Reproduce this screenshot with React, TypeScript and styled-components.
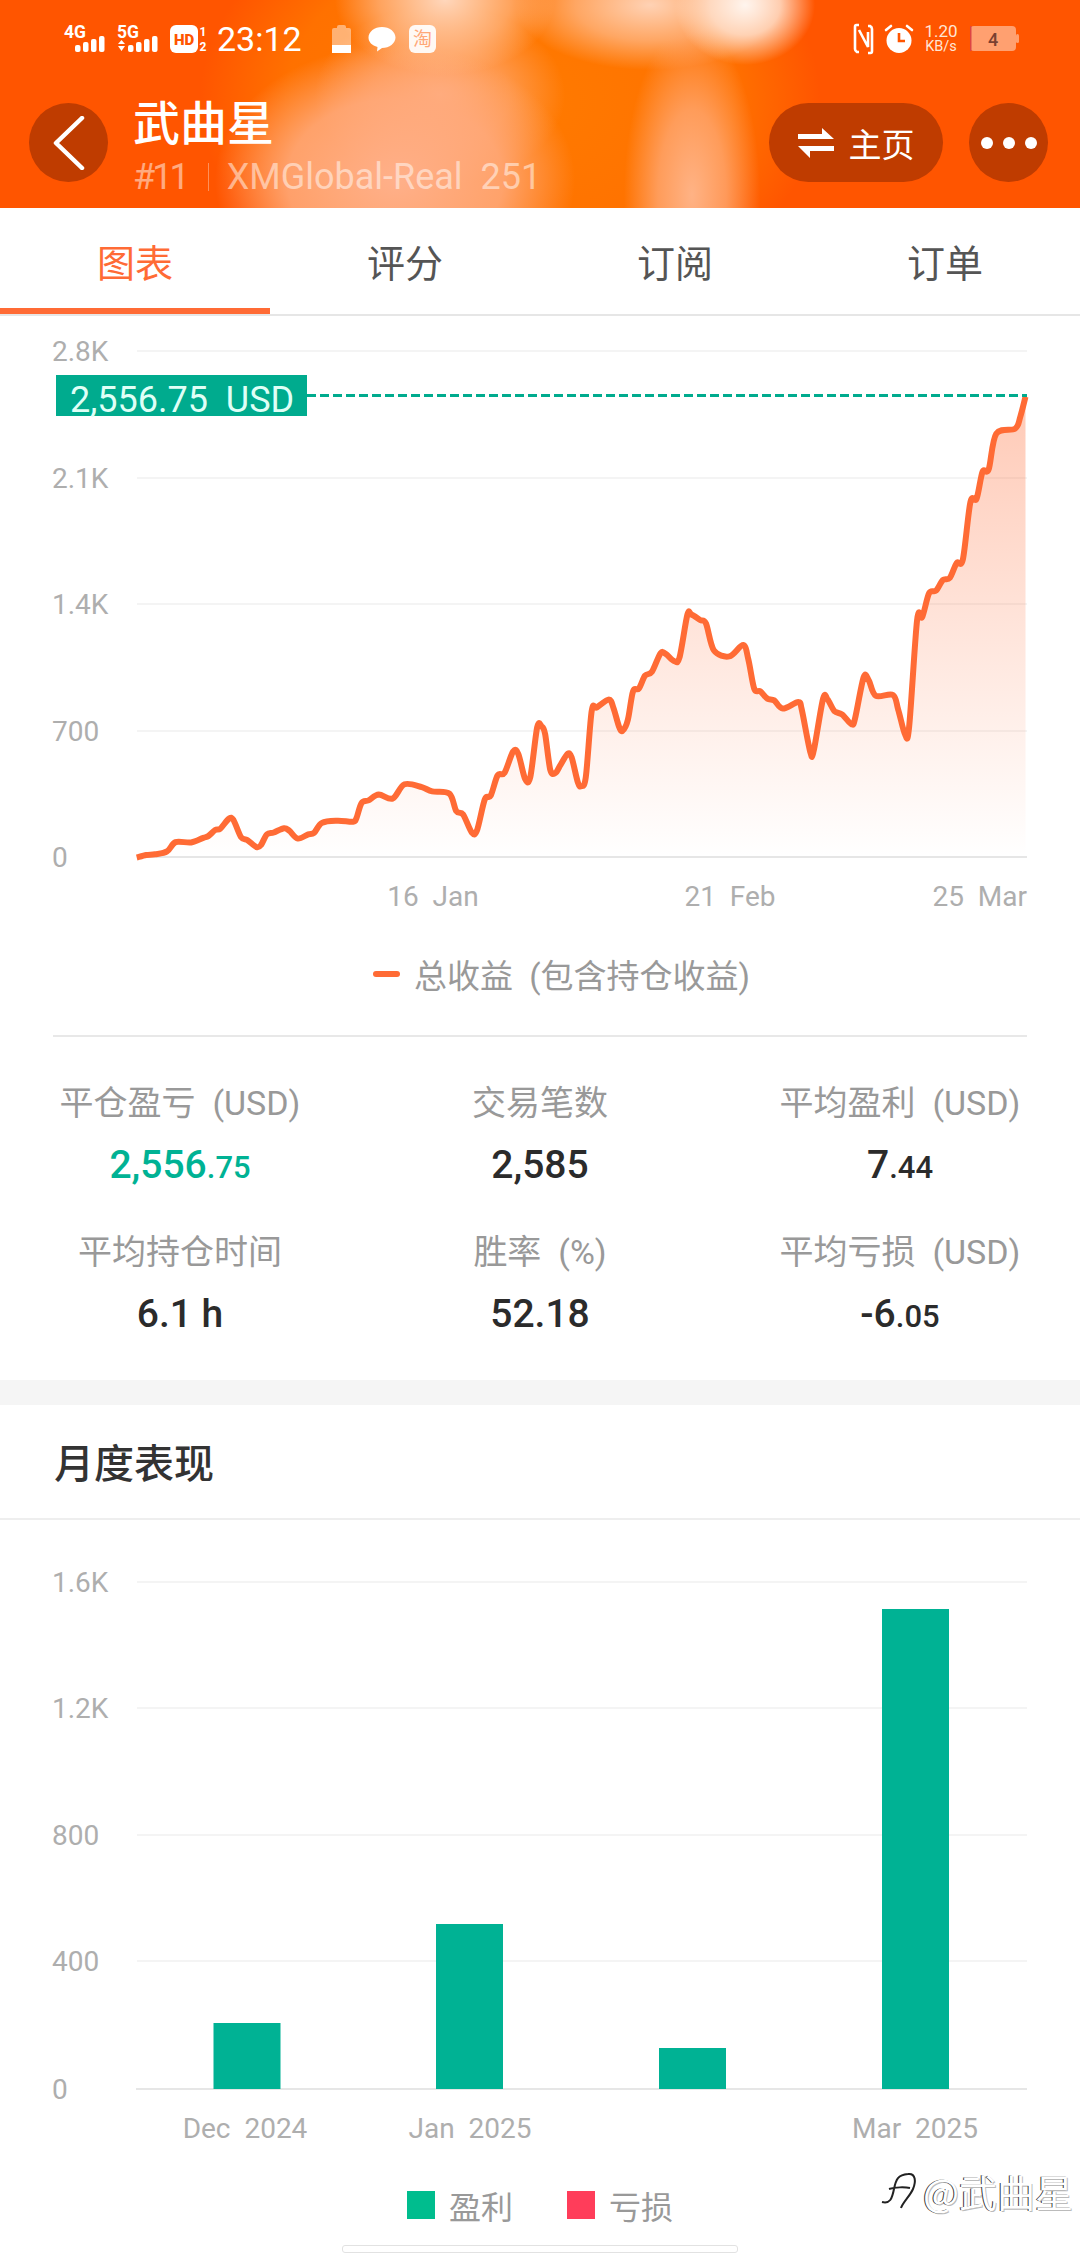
import React from "react";
import styled, { createGlobalStyle } from "styled-components";

const Global = createGlobalStyle`
  html, body { margin: 0; padding: 0; background: #fff; }
  body { font-family: Roboto, "Noto Sans CJK SC", sans-serif; }
  * { box-sizing: border-box; }
`;

const Page = styled.div`
  position: relative;
  width: 1080px;
  height: 2256px;
  overflow: hidden;
  background: #fff;
`;

const Header = styled.header`
  height: 208px;
  padding-top: 24px;
  color: #fff;
  background-color: #ff5500;
  background-image:
    radial-gradient(ellipse 70px 60px at 745px 5px, rgba(255,245,238,1), rgba(255,225,205,.85) 50%, rgba(255,210,180,0) 100%),
    radial-gradient(ellipse 68px 170px at 692px 195px, rgba(255,182,140,.95), rgba(255,170,120,.75) 50%, rgba(255,140,50,0) 100%),
    radial-gradient(ellipse 135px 65px at 650px 5px, rgba(255,215,190,.95), rgba(255,200,165,.6) 55%, rgba(255,170,110,0) 100%),
    radial-gradient(ellipse 110px 75px at 445px 0px, rgba(255,220,198,.95), rgba(255,195,155,.6) 60%, rgba(255,170,120,0) 100%),
    radial-gradient(ellipse 180px 135px at 395px 180px, rgba(255,176,138,1), rgba(255,170,125,.85) 60%, rgba(255,130,40,0) 100%),
    radial-gradient(ellipse 125px 90px at 440px 95px, rgba(255,180,140,.9), rgba(255,170,120,.6) 55%, rgba(255,140,60,0) 100%),
    radial-gradient(ellipse 310px 220px at 510px 100px, rgba(255,125,0,.95), rgba(255,125,0,.7) 72%, rgba(255,100,0,0) 100%);
`;

const StatusBar = styled.div`
  display: flex;
  align-items: center;
  height: 30px;
  padding: 0 61px 0 64px;
`;

const Glyph = styled.svg<{ $gap?: number }>`
  display: block;
  flex: none;
  overflow: visible;
  margin-left: ${(p) => p.$gap ?? 0}px;
`;

const Clock = styled.span`
  margin-left: 9px;
  font-size: 34px;
  line-height: 30px;
  font-weight: 400;
`;

const Spacer = styled.div`
  flex: 1;
`;

const Speed = styled.div`
  display: flex;
  flex-direction: column;
  align-items: center;
  margin-left: 12px;
  width: 32px;
  font-size: 17px;
  line-height: 15px;
  color: #ffe6d5;
`;

const SpeedUnit = styled.span`
  font-size: 14.5px;
  white-space: nowrap;
`;

const NavRow = styled.div`
  display: flex;
  align-items: flex-start;
  height: 79px;
  margin-top: 49px;
  padding: 0 32px 0 29px;
`;

const RoundButton = styled.div<{ $gap?: number }>`
  display: flex;
  align-items: center;
  justify-content: center;
  flex: none;
  width: 79px;
  height: 79px;
  margin-left: ${(p) => p.$gap ?? 0}px;
  border-radius: 50%;
  background: #bf3c00;
`;

const TitleBlock = styled.div`
  margin: -8px 0 0 25px;
`;

const Name = styled.div`
  font-size: 47px;
  line-height: 50px;
  font-weight: 500;
  font-family: "Noto Sans CJK SC", sans-serif;
`;

const Sub = styled.div`
  display: flex;
  align-items: center;
  margin-top: 10px;
  font-size: 36px;
  line-height: 44px;
  color: rgba(255, 255, 255, 0.5);
  white-space: pre;
`;

const SubRank = styled.span`
  letter-spacing: -3px;
`;

const SubBar = styled.span`
  width: 1px;
  height: 28px;
  margin: 0 18px 0 21px;
  background: rgba(255, 255, 255, 0.35);
`;

const Pill = styled.div`
  display: flex;
  align-items: center;
  justify-content: center;
  gap: 15px;
  width: 174px;
  height: 79px;
  border-radius: 40px;
  background: #bf3c00;
  font: 400 33px "Noto Sans CJK SC", sans-serif;
`;

const Dot = styled.span`
  width: 12px;
  height: 12px;
  border-radius: 50%;
  background: #fff;
`;

const Dots = styled.div`
  display: flex;
  gap: 10px;
`;

const Tabs = styled.nav`
  display: grid;
  grid-template-columns: repeat(4, 270px);
  height: 108px;
  border-bottom: 2px solid #e6e6e6;
`;

const Tab = styled.div<{ $active?: boolean }>`
  display: flex;
  align-items: center;
  justify-content: center;
  height: 106px;
  padding-top: 5px;
  font: 400 38px "Noto Sans CJK SC", sans-serif;
  color: ${(p) => (p.$active ? "#ff6b35" : "#555")};
  border-bottom: 6px solid ${(p) => (p.$active ? "#ff6b35" : "transparent")};
`;

const Chart = styled.svg`
  display: block;
`;

const Grid = styled.line`
  stroke: #f4f4f4;
  stroke-width: 2;
`;

const Base = styled.line`
  stroke: #e6e6e6;
  stroke-width: 2;
`;

const AxisText = styled.text`
  font: 400 28px Roboto, sans-serif;
  fill: #aeaeae;
  white-space: pre;
`;

const BadgeText = styled.text`
  font: 400 36px Roboto, sans-serif;
  fill: #dffff6;
  white-space: pre;
`;

const LineLegend = styled.div`
  display: flex;
  align-items: center;
  justify-content: center;
  gap: 14px;
  height: 88px;
  padding-left: 43px;
  font-size: 33px;
  color: #999;
  white-space: pre;
`;

const LineMark = styled.span`
  width: 27px;
  height: 6px;
  border-radius: 3px;
  background: #ff6b35;
`;

const Divider = styled.div`
  height: 2px;
  margin: 17px 53px 0;
  background: #e8e8e8;
`;

const Stats = styled.section`
  display: grid;
  grid-template-columns: repeat(3, 360px);
  row-gap: 37px;
  padding: 44px 0 38px;
`;

const Stat = styled.div`
  display: flex;
  flex-direction: column;
  align-items: center;
  gap: 15px;
`;

const StatLabel = styled.div`
  font-size: 34px;
  line-height: 44px;
  color: #999;
  white-space: pre;
`;

const StatValue = styled.div<{ $up?: boolean }>`
  font-size: 39px;
  line-height: 50px;
  font-weight: 500;
  color: ${(p) => (p.$up ? "#00b294" : "#2b2b2b")};
`;

const Cents = styled.span`
  font-size: 31px;
`;

const Band = styled.div`
  height: 25px;
  background: #f5f5f5;
`;

const SectionTitle = styled.h2`
  display: flex;
  align-items: center;
  height: 115px;
  margin: 0;
  padding: 0 0 2px 54px;
  border-bottom: 2px solid #eee;
  font: 500 40px "Noto Sans CJK SC", sans-serif;
  color: #333;
`;

const BarLegend = styled.div`
  display: flex;
  align-items: center;
  height: 90px;
  padding: 0 0 0 407px;
  font-size: 32px;
  color: #999;
`;

const Swatch = styled.span<{ $color: string; $gap?: number }>`
  width: 28px;
  height: 28px;
  margin: 0 14px 0 ${(p) => p.$gap ?? 0}px;
  background: ${(p) => p.$color};
`;

const Watermark = styled.div`
  position: absolute;
  right: 0;
  bottom: 38px;
  left: 881px;
  display: flex;
  align-items: center;
  gap: 6px;
  font: 400 38px "Noto Sans CJK SC", sans-serif;
  color: #fff;
  text-shadow: -1px 0 0 #333, 1px 1px 0 #bbb;
  white-space: nowrap;
`;

const HomeBar = styled.div`
  position: absolute;
  left: 342px;
  bottom: 3px;
  width: 396px;
  height: 8px;
  border: 1px solid #e2e2e2;
  border-radius: 3px;
  background: #fff;
`;

/* Points of the equity curve as read from the reference: [page x, page y]. */
const raw3: [number, number][] = [[397,1505],[425,1498],[450,1496],[485,1488],[510,1462],[555,1463],[590,1450],[605,1445],[625,1428],[640,1424],[665,1396],[678,1400],[700,1448],[718,1456],[745,1476],[758,1470],[775,1440],[795,1435],[825,1423],[840,1430],[865,1452],[895,1440],[912,1436],[935,1408],[980,1402],[1025,1405],[1035,1395],[1050,1352],[1070,1345],[1100,1329],[1140,1340],[1175,1300],[1225,1308],[1255,1320],[1305,1326],[1325,1375],[1345,1385],[1370,1435],[1385,1430],[1408,1342],[1425,1332],[1445,1275],[1465,1268],[1490,1208],[1505,1215],[1525,1285],[1540,1280],[1560,1140]];
const raw4: [number, number][] = [[5,1138],[15,1160],[30,1260],[45,1268],[60,1245],[80,1215],[92,1225],[110,1295],[120,1305],[133,1280],[150,1095],[165,1085],[200,1063],[213,1085],[230,1140],[240,1150],[255,1120],[270,1040],[287,1032],[305,996],[325,985],[350,933],[365,935],[390,955],[405,945],[428,825],[440,825],[465,840],[482,850],[505,925],[550,942],[590,910],[605,950],[622,1032],[640,1040],[660,1060],[680,1065],[705,1088],[750,1070],[760,1090],[785,1210],[795,1205],[822,1060],[835,1062],[855,1095],[878,1105],[905,1132],[915,1115],[940,1000],[955,1010],[975,1052],[1025,1050],[1040,1090],[1060,1160],[1072,1140],[1095,840],[1110,832],[1130,765],[1150,758],[1170,728],[1190,722],[1210,680],[1228,670],[1250,510],[1268,500],[1285,425],[1303,418],[1325,318],[1380,304],[1395,270],[1410,215]];
const pts: [number, number][] = [
  ...raw3.map(([x, y]): [number, number] => [x / 2.904, 320 + y / 2.8]),
  ...raw4.map(([x, y]): [number, number] => [540 + x / 2.904, 320 + y / 2.8]),
];

const smooth = (p: [number, number][]) => {
  const t = 0.16;
  let d = `M${p[0][0].toFixed(1)} ${p[0][1].toFixed(1)}`;
  for (let i = 0; i < p.length - 1; i++) {
    const a = p[Math.max(i - 1, 0)], b = p[i], c = p[i + 1], e = p[Math.min(i + 2, p.length - 1)];
    d += `C${(b[0] + (c[0] - a[0]) * t).toFixed(1)} ${(b[1] + (c[1] - a[1]) * t).toFixed(1)} ${(c[0] - (e[0] - b[0]) * t).toFixed(1)} ${(c[1] - (e[1] - b[1]) * t).toFixed(1)} ${c[0].toFixed(1)} ${c[1].toFixed(1)}`;
  }
  return d;
};
const curve = smooth(pts);
const last = pts[pts.length - 1];

const Signal = ({ label, arrows, gap }: { label: string; arrows?: boolean; gap?: number }) => (
  <Glyph $gap={gap} width="43" height="30" viewBox="0 0 43 30">
    <text x="0" y="14" fontFamily="Roboto" fontWeight="700" fontSize="19" textLength="22" lengthAdjust="spacingAndGlyphs" fill="#fff">{label}</text>
    {[0, 1, 2, 3].map((i) => (
      <rect key={i} x={11 + i * 8} y={21 - i * 3} width="5.500" height={7 + i * 3} rx="2" fill="#fff" />
    ))}
    {arrows ? <path d="M1 20l3.500-4 3.500 4zM1 22l3.500 5 3.500-5z" fill="#fff" /> : null}
  </Glyph>
);

export default function App() {
  return (
    <Page>
      <Global />
      <Header>
        <StatusBar>
          <Signal label="4G" />
          <Signal label="5G" arrows gap={10} />
          <Glyph $gap={10} width="38" height="30" viewBox="0 0 38 30">
            <rect x="0" y="1" width="28" height="28" rx="6" fill="#fff" />
            <text x="14" y="21" textAnchor="middle" fontFamily="Roboto" fontWeight="900" fontSize="15" fill="#ff5500">HD</text>
            <text x="33" y="12" textAnchor="middle" fontFamily="Roboto" fontWeight="700" fontSize="12" fill="#fff">1</text>
            <text x="33" y="27" textAnchor="middle" fontFamily="Roboto" fontWeight="700" fontSize="12" fill="#fff">2</text>
          </Glyph>
          <Clock>23:12</Clock>
          <Glyph $gap={30} width="19" height="28" viewBox="0 0 19 28">
            <path d="M5 2q0-2 2-2h5q2 0 2 2v1h3q2 0 2 2v16H0V5q0-2 2-2h3z" fill="#fff" fillOpacity=".45" />
            <path d="M0 20h19v8H0z" fill="#fff" />
          </Glyph>
          <Glyph $gap={17} width="28" height="26" viewBox="0 0 28 26">
            <path d="M14 1c7.500 0 13.500 4.700 13.500 10.500S21.500 22 14 22l-5 3.500 .5-4.500C4 19.500 .5 16 .5 11.500 .5 5.700 6.500 1 14 1z" fill="#fff" />
          </Glyph>
          <Glyph $gap={13} width="27" height="28" viewBox="0 0 27 28">
            <rect width="27" height="28" rx="6" fill="#fff" fillOpacity=".92" />
            <text x="13.500" y="21" textAnchor="middle" fontFamily="Noto Sans CJK SC" fontSize="19" fill="#ffa878">淘</text>
          </Glyph>
          <Spacer />
          <Glyph width="19" height="30" viewBox="0 0 19 30">
            <path d="M5 1H2.500Q1 1 1 3v22q0 2 2 3h2M14 29h2.500q1.500 0 1.500-2V5q0-2-2-3h-2M5 6l9 17V8" fill="none" stroke="#fff" strokeWidth="2.600" />
          </Glyph>
          <Glyph $gap={12} width="28" height="30" viewBox="0 0 28 30">
            <circle cx="14" cy="16.500" r="12.500" fill="#fff" />
            <path d="M14 9v8h6" fill="none" stroke="#ff5500" strokeWidth="2.600" />
            <path d="M1 6l5-4M27 6l-5-4" stroke="#fff" strokeWidth="2.600" strokeLinecap="round" />
          </Glyph>
          <Speed>
            <span>1.20</span>
            <SpeedUnit>KB/s</SpeedUnit>
          </Speed>
          <Glyph $gap={13} width="49" height="28" viewBox="0 0 49 28">
            <rect x="0" y="1" width="46" height="25" rx="4" fill="#ffa070" />
            <rect x="0" y="1" width="1.500" height="25" fill="#d44" />
            <rect x="46" y="9" width="3" height="9" rx="1.500" fill="#ffa070" />
            <text x="23" y="20.500" textAnchor="middle" fontFamily="Roboto" fontWeight="500" fontSize="18" fill="#7a4030">4</text>
          </Glyph>
        </StatusBar>
        <NavRow>
          <RoundButton>
            <svg width="34" height="54" viewBox="0 0 34 54">
              <path d="M30 2 4 27l26 25" fill="none" stroke="#fff" strokeWidth="4.500" strokeLinecap="round" strokeLinejoin="round" />
            </svg>
          </RoundButton>
          <TitleBlock>
            <Name>武曲星</Name>
            <Sub>
              <SubRank>#11</SubRank>
              <SubBar />
              XMGlobal-Real  251
            </Sub>
          </TitleBlock>
          <Spacer />
          <Pill>
            <svg width="36" height="30" viewBox="0 0 36 30">
              <path d="M0 6h24V0l12 11H0zM36 18v5H12v7L0 18z" fill="#fff" />
            </svg>
            主页
          </Pill>
          <RoundButton $gap={26}>
            <Dots>
              <Dot />
              <Dot />
              <Dot />
            </Dots>
          </RoundButton>
        </NavRow>
      </Header>

      <Tabs>
        <Tab $active>图表</Tab>
        <Tab>评分</Tab>
        <Tab>订阅</Tab>
        <Tab>订单</Tab>
      </Tabs>

      <Chart width="1080" height="614" viewBox="0 316 1080 614">
        <defs>
          <linearGradient id="equityFill" x1="0" y1="397" x2="0" y2="857" gradientUnits="userSpaceOnUse">
            <stop offset="0" stopColor="#ff6b35" stopOpacity=".36" />
            <stop offset="1" stopColor="#ff6b35" stopOpacity="0" />
          </linearGradient>
        </defs>
        {[351, 478, 604, 731].map((y) => (
          <Grid key={y} x1="137" x2="1027" y1={y} y2={y} />
        ))}
        <Base x1="137" x2="1027" y1="857" y2="857" />
        <path d={`${curve}L${last[0]} 857L${pts[0][0]} 857Z`} fill="url(#equityFill)" />
        <path d={curve} fill="none" stroke="#ff6b35" strokeWidth="6" strokeLinejoin="round" />
        <line x1="307" x2="1027" y1="395.500" y2="395.500" stroke="#00ab8e" strokeWidth="3" strokeDasharray="9 4" />
        <rect x="56" y="375" width="251" height="41" fill="#00ab8e" />
        <BadgeText x="70" y="412">2,556.75  USD</BadgeText>
        {[["2.8K", 351], ["2.1K", 478], ["1.4K", 604], ["700", 731], ["0", 857]].map(([t, y]) => (
          <AxisText key={t as string} x="52" y={(y as number) + 10}>{t}</AxisText>
        ))}
        <AxisText x="433" y="906" textAnchor="middle">16  Jan</AxisText>
        <AxisText x="730" y="906" textAnchor="middle">21  Feb</AxisText>
        <AxisText x="1027" y="906" textAnchor="end">25  Mar</AxisText>
      </Chart>

      <LineLegend>
        <LineMark />
        总收益  (包含持仓收益)
      </LineLegend>
      <Divider />

      <Stats>
        <Stat>
          <StatLabel>平仓盈亏  (USD)</StatLabel>
          <StatValue $up>2,556<Cents>.75</Cents></StatValue>
        </Stat>
        <Stat>
          <StatLabel>交易笔数</StatLabel>
          <StatValue>2,585</StatValue>
        </Stat>
        <Stat>
          <StatLabel>平均盈利  (USD)</StatLabel>
          <StatValue>7<Cents>.44</Cents></StatValue>
        </Stat>
        <Stat>
          <StatLabel>平均持仓时间</StatLabel>
          <StatValue>6.1 h</StatValue>
        </Stat>
        <Stat>
          <StatLabel>胜率  (%)</StatLabel>
          <StatValue>52.18</StatValue>
        </Stat>
        <Stat>
          <StatLabel>平均亏损  (USD)</StatLabel>
          <StatValue>-6<Cents>.05</Cents></StatValue>
        </Stat>
      </Stats>

      <Band />
      <SectionTitle>月度表现</SectionTitle>

      <Chart width="1080" height="640" viewBox="0 1520 1080 640">
        {[1582, 1708, 1835, 1961].map((y) => (
          <Grid key={y} x1="137" x2="1027" y1={y} y2={y} />
        ))}
        <Base x1="136" x2="1027" y1="2089" y2="2089" />
        {[[213.5, 2023], [436, 1924], [659, 2048], [882, 1609]].map(([x, y]) => (
          <rect key={x} x={x} y={y} width="67" height={2089 - y} fill="#00b294" />
        ))}
        {[["1.6K", 1582], ["1.2K", 1708], ["800", 1835], ["400", 1961], ["0", 2089]].map(([t, y]) => (
          <AxisText key={t as string} x="52" y={(y as number) + 10}>{t}</AxisText>
        ))}
        <AxisText x="245" y="2138" textAnchor="middle">Dec  2024</AxisText>
        <AxisText x="470" y="2138" textAnchor="middle">Jan  2025</AxisText>
        <AxisText x="915" y="2138" textAnchor="middle">Mar  2025</AxisText>
      </Chart>

      <BarLegend>
        <Swatch $color="#00bd8e" />
        盈利
        <Swatch $color="#ff3d5a" $gap={54} />
        亏损
      </BarLegend>

      <Watermark>
        <svg width="36" height="38" viewBox="0 0 36 38">
          <path d="M1 30c8 2 10-3 12-13S17 3 27 2c8-1 8 8 5 15s-10 13-12 19M8 17c6-2 16-2 21-1" fill="none" stroke="#222" strokeWidth="2" />
        </svg>
        @武曲星
      </Watermark>
      <HomeBar />
    </Page>
  );
}
